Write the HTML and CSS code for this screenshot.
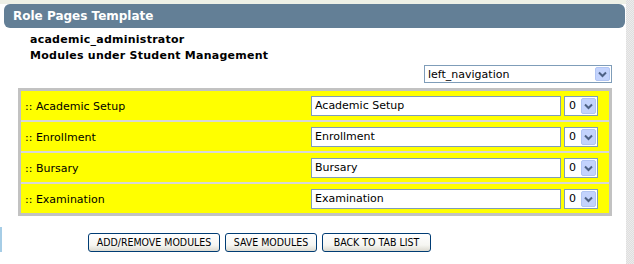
FILE: index.html
```html
<!DOCTYPE html>
<html>
<head>
<meta charset="utf-8">
<title>Role Pages Template</title>
<link rel="stylesheet" href="styles.css">
</head>
<body>
<div class="page">
  <div class="main">
    <div class="topline"></div>
    <div class="header">Role Pages Template</div>
    <div class="info">
      <div class="info-line">academic_administrator</div>
      <div class="info-line">Modules under Student Management</div>
    </div>
    <div class="navrow">
      <span class="sel sel-wide">
        <select class="sel-box"><option>left_navigation</option></select>
        <svg class="sel-arrow" width="15" height="14" viewBox="0 0 15 14"><rect x="0.5" y="0.5" width="14" height="13" rx="1.5" fill="#c3d3fd" stroke="#b1c5f3"/><path d="M4 5.5 L7.5 9 L11 5.5" fill="none" stroke="#4d6185" stroke-width="2"/></svg>
      </span>
    </div>
    <div class="modules">
      <div class="row">
        <span class="label">:: Academic Setup</span>
        <input class="name" type="text" value="Academic Setup">
        <span class="sel sel-num">
          <select class="sel-box"><option>0</option></select>
          <svg class="sel-arrow" width="15" height="16" viewBox="0 0 15 16"><rect x="0.5" y="0.5" width="14" height="15" rx="1.5" fill="#c3d3fd" stroke="#b1c5f3"/><path d="M4 6.5 L7.5 10 L11 6.5" fill="none" stroke="#4d6185" stroke-width="2"/></svg>
        </span>
      </div>
      <div class="row">
        <span class="label">:: Enrollment</span>
        <input class="name" type="text" value="Enrollment">
        <span class="sel sel-num">
          <select class="sel-box"><option>0</option></select>
          <svg class="sel-arrow" width="15" height="16" viewBox="0 0 15 16"><rect x="0.5" y="0.5" width="14" height="15" rx="1.5" fill="#c3d3fd" stroke="#b1c5f3"/><path d="M4 6.5 L7.5 10 L11 6.5" fill="none" stroke="#4d6185" stroke-width="2"/></svg>
        </span>
      </div>
      <div class="row">
        <span class="label">:: Bursary</span>
        <input class="name" type="text" value="Bursary">
        <span class="sel sel-num">
          <select class="sel-box"><option>0</option></select>
          <svg class="sel-arrow" width="15" height="16" viewBox="0 0 15 16"><rect x="0.5" y="0.5" width="14" height="15" rx="1.5" fill="#c3d3fd" stroke="#b1c5f3"/><path d="M4 6.5 L7.5 10 L11 6.5" fill="none" stroke="#4d6185" stroke-width="2"/></svg>
        </span>
      </div>
      <div class="row">
        <span class="label">:: Examination</span>
        <input class="name" type="text" value="Examination">
        <span class="sel sel-num">
          <select class="sel-box"><option>0</option></select>
          <svg class="sel-arrow" width="15" height="16" viewBox="0 0 15 16"><rect x="0.5" y="0.5" width="14" height="15" rx="1.5" fill="#c3d3fd" stroke="#b1c5f3"/><path d="M4 6.5 L7.5 10 L11 6.5" fill="none" stroke="#4d6185" stroke-width="2"/></svg>
        </span>
      </div>
    </div>
    <div class="actions">
      <span class="edge"></span>
      <div class="buttons">
        <button class="btn btn-add" type="button">ADD/REMOVE MODULES</button>
        <button class="btn btn-save" type="button">SAVE MODULES</button>
        <button class="btn btn-back" type="button">BACK TO TAB LIST</button>
      </div>
    </div>
  </div>
  <div class="scroll"></div>
</div>
</body>
</html>
```

FILE: styles.css
```css
* { box-sizing: border-box; }
html, body { margin: 0; padding: 0; }
body {
  background: #ffffff;
  font-family: "DejaVu Sans", Verdana, sans-serif;
  font-size: 11px;
  color: #000000;
}
.page {
  display: flex;
  width: 634px;
  height: 264px;
  overflow: hidden;
}
.main {
  width: 626px;
  display: flex;
  flex-direction: column;
}
.scroll {
  flex: 1;
  background: repeating-conic-gradient(#dedede 0 25%, #ececec 0 50%) 0 0 / 2px 2px;
}
.topline {
  height: 4px;
  background: #eef0e6;
}
.header {
  margin-left: 4px;
  width: 621px;
  height: 24px;
  border-radius: 6px;
  background: #637f96;
  color: #ffffff;
  font-weight: bold;
  font-size: 12px;
  line-height: 24px;
  padding-left: 9px;
}
.info {
  margin-top: 4px;
  padding-left: 30px;
  font-weight: bold;
  font-size: 11px;
  line-height: 16px;
  letter-spacing: 0.25px;
}
.navrow {
  margin-top: 1px;
  display: flex;
  justify-content: flex-end;
  padding-right: 14px;
}
.sel {
  position: relative;
  display: inline-block;
}
.sel-box {
  appearance: none;
  -webkit-appearance: none;
  display: block;
  margin: 0;
  border: 1px solid #7f9db9;
  border-radius: 0;
  background: #ffffff;
  font-family: "DejaVu Sans", Verdana, sans-serif;
  font-size: 11px;
  color: #000000;
  padding: 0 0 0 3px;
}
.sel-arrow {
  position: absolute;
  right: 2px;
  top: 2px;
}
.sel-wide .sel-box {
  width: 188px;
  height: 18px;
}
.sel-num .sel-box {
  width: 34px;
  height: 20px;
  padding-left: 4px;
}
.modules {
  margin-top: 5px;
  margin-left: 18px;
  width: 594px;
  border: 3px solid #c2c2c2;
  background: #d8d8d8;
  display: flex;
  flex-direction: column;
  gap: 2px;
}
.row {
  height: 29px;
  background: #ffff00;
  display: flex;
  align-items: center;
  padding-left: 4px;
  padding-right: 11px;
}
.label {
  flex: 1;
  padding-top: 1px;
}
.name {
  width: 250px;
  height: 20px;
  margin: 0 3px 0 0;
  border: 1px solid #7f9db9;
  padding: 0 0 0 3px;
  font-family: "DejaVu Sans", Verdana, sans-serif;
  font-size: 11px;
  color: #000000;
  background: #ffffff;
}
.actions {
  margin-top: 11px;
  display: flex;
  align-items: flex-start;
}
.edge {
  width: 2px;
  height: 25px;
  background: #a6cde6;
}
.buttons {
  margin-left: 86px;
  margin-top: 6px;
  display: flex;
  gap: 5px;
}
.btn {
  height: 19px;
  margin: 0;
  padding: 0;
  border: 1px solid #003c74;
  border-radius: 3px;
  background: linear-gradient(#ffffff, #f6f6f2 65%, #dcdad0);
  font-family: "DejaVu Sans Condensed", "DejaVu Sans", Verdana, sans-serif;
  font-stretch: condensed;
  font-size: 10.5px;
  color: #000000;
  line-height: 17px;
}
.btn-add { width: 132px; }
.btn-save { width: 92px; }
.btn-back { width: 109px; }
```
